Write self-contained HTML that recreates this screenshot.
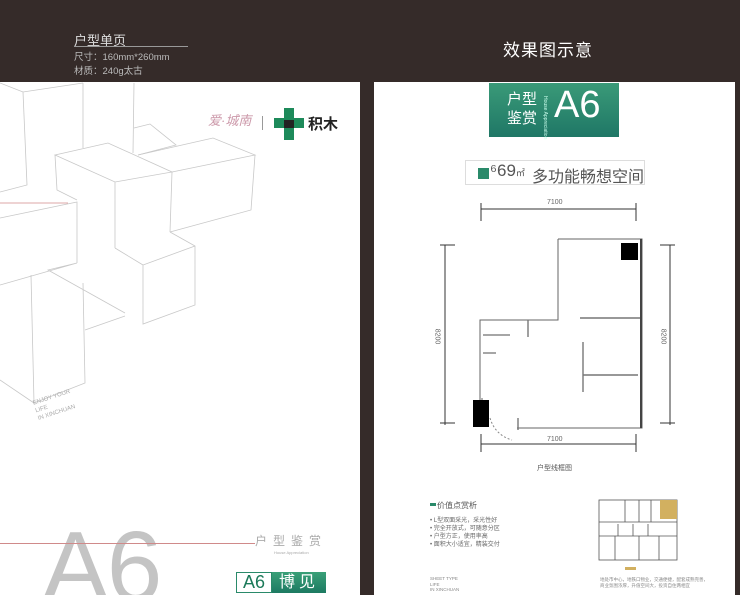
<!DOCTYPE html>
<html><head><meta charset="utf-8"><style>
*{margin:0;padding:0;box-sizing:border-box}
html{width:740px;height:595px;overflow:hidden}
body{width:740px;height:595px;background:#352b29;position:relative;overflow:hidden;font-family:"Liberation Sans","Noto Sans CJK SC",sans-serif}
.a{position:absolute;white-space:nowrap}
</style></head><body>
<div class="a" style="left:74px;top:30px;color:#ddd;font-size:13px">户型单页</div>
<div class="a" style="left:74px;top:46px;width:114px;height:1px;background:#999"></div>
<div class="a" style="left:74px;top:49px;color:#bbb;font-size:9.5px">尺寸：160mm*260mm</div>
<div class="a" style="left:74px;top:63px;color:#bbb;font-size:9.5px">材质：240g太古</div>
<div class="a" style="left:503px;top:36px;color:#fff;font-size:17px;letter-spacing:1px">效果图示意</div>

<div class="a" style="left:0;top:82px;width:360px;height:513px;background:#fff"></div>
<div class="a" style="left:374px;top:82px;width:361px;height:513px;background:#fff"></div>

<svg class="a" style="left:0;top:0" width="360" height="590" fill="none" stroke="#c8c8c8" stroke-width="0.8">
<path d="M0 83 L23 92 L83 83 M23 92 L27 185 L0 192 M83 83 L83 148 M134 83 L133 153"/>
<path d="M134 128 L150 124 L176 145 L138 155"/>
<path d="M55 155 L108 143 L172 172 L115 182 Z M115 182 L115 248 M55 155 L57 190 L77 200 M172 172 L170 232"/>
<path d="M138 155 L213 138 L255 155 L172 172 M255 155 L251 210 L170 232"/>
<path d="M170 232 L195 246 L195 305 L143 324 L143 265 L195 246 M115 248 L143 265"/>
<path d="M0 218 L77 202 L77 263 M0 285 L77 263 L48 270 L125 313 M31 275 L34 403 L85 383 L83 283 M85 330 L125 316 M0 380 L34 403"/>
<path d="M0 203 L68 203" stroke="#d08a8a"/>
</svg>
<div class="a" style="left:32px;top:400px;color:#aaa;font-size:6px;line-height:8px;transform:rotate(-18deg);transform-origin:left top">ENJOY YOUR<br>LIFE<br>IN XINCHUAN</div>

<div class="a" style="left:208px;top:110px;font-size:13px;color:#c9a;font-style:italic">爱·城南</div>
<div class="a" style="left:262px;top:116px;width:1px;height:14px;background:#999"></div>
<svg class="a" style="left:272px;top:106px" width="34" height="36"><path d="M12 2h10v10h10v10h-10v12h-10v-12h-10v-10h10z" fill="#1d8a5a"/><rect x="12" y="14" width="10" height="8" fill="#222"/></svg>
<div class="a" style="left:308px;top:113px;font-size:15px;color:#222;font-weight:bold">积木</div>

<div class="a" style="left:0;top:520px;width:200px;height:75px;overflow:hidden">
<div class="a" style="left:42px;top:0;height:75px;font-size:100px;color:#c4c4c4;letter-spacing:-2px;line-height:95px;overflow:hidden">A6</div>
</div>
<div class="a" style="left:0;top:543px;width:255px;height:1px;background:#d08a8a"></div>
<div class="a" style="left:255px;top:532px;font-size:12px;color:#aaa;letter-spacing:6px">户型鉴赏</div>
<div class="a" style="left:274px;top:550px;font-size:4px;color:#aaa">House Appreciation</div>
<div class="a" style="left:236px;top:572px;width:36px;height:21px;border:1px solid #2a8a6a;color:#1c7a5a;font-size:18px;line-height:19px;text-align:center">A6</div>
<div class="a" style="left:272px;top:572px;width:54px;height:21px;background:linear-gradient(#3aa078,#1d7a62);color:#fff;font-size:16px;line-height:21px;text-align:center;letter-spacing:4px">博见</div>

<div class="a" style="left:489px;top:83px;width:130px;height:54px;background:linear-gradient(#3a9a78,#1f7766)"></div>
<div class="a" style="left:507px;top:90px;color:#fff;font-size:15px;line-height:19px">户型<br>鉴赏</div>
<div class="a" style="left:542px;top:96px;color:#cfe;font-size:5px;writing-mode:vertical-rl">House Appreciation</div>
<div class="a" style="left:554px;top:84px;color:#fff;font-size:38px">A6</div>

<div class="a" style="left:465px;top:160px;width:180px;height:25px;border:1px solid #ddd;background:#fff"></div>
<div class="a" style="left:478px;top:168px;width:11px;height:11px;background:#2a8a6a"></div>
<div class="a" style="left:490px;top:161px;font-size:17px;color:#555">⁶69<span style="font-size:9px">㎡</span></div>
<div class="a" style="left:532px;top:163px;font-size:16px;color:#555">多功能畅想空间</div>

<svg class="a" style="left:420px;top:190px" width="280" height="280" fill="none" stroke="#333" stroke-width="1">
<path d="M61 13 V31 M216 13 V31 M61 19 H216"/>
<path d="M25 55 V235 M20 55 H35 M20 233 H35"/>
<path d="M250 55 V235 M240 55 H255 M240 233 H255"/>
<path d="M61 244 V262 M216 244 V262 M61 254 H216"/>
<path d="M138 49 H222 V238 H97 M138 49 V130 H60 V210 M62 208 V230" stroke="#666"/>
<path d="M221 49 V238" stroke="#444" stroke-width="2"/>
<path d="M160 128 H220 M163 152 V202 M163 185 H218 M98 228 V240 M108 130 V147" stroke="#777" stroke-width="1.4"/>
<path d="M63 145 H90 M63 163 H76" stroke="#888" stroke-width="1.5"/>
<rect x="201" y="53" width="17" height="17" fill="#000" stroke="none"/>
<rect x="53" y="210" width="16" height="27" fill="#000" stroke="none"/>
<path d="M70 228 Q75 245 92 250" stroke="#888" stroke-dasharray="2 2"/>
</svg>
<div class="a" style="left:547px;top:199px;font-size:7px;color:#666">7100</div>
<div class="a" style="left:547px;top:436px;font-size:7px;color:#666">7100</div>
<div class="a" style="left:429px;top:333px;font-size:7px;color:#666;transform:rotate(90deg)">8200</div>
<div class="a" style="left:655px;top:333px;font-size:7px;color:#666;transform:rotate(90deg)">8200</div>
<div class="a" style="left:537px;top:463px;font-size:7px;color:#555">户型线框图</div>

<div class="a" style="left:430px;top:503px;width:6px;height:3px;background:#2a8a6a"></div>
<div class="a" style="left:437px;top:500px;font-size:8px;color:#555">价值点赏析</div>
<div class="a" style="left:430px;top:517px;font-size:6px;line-height:8px;color:#666">•  L型双面采光，采光性好<br>•  完全开放式，可随意分区<br>•  户型方正，使用率高<br>•  面积大小适宜，精装交付</div>
<div class="a" style="left:430px;top:576px;height:17px;overflow:hidden;font-size:4.5px;line-height:5.5px;color:#888">SHEET TYPE<br>LIFE<br>IN XINCHUAN</div>
<svg class="a" style="left:598px;top:498px" width="82" height="64" fill="none" stroke="#555" stroke-width="0.8">
<rect x="1" y="2" width="78" height="60"/>
<path d="M1 24 H79 M1 38 H79 M27 2 V24 M41 2 V24 M53 2 V24 M17 38 V62 M41 38 V62 M61 38 V62 M20 26 V38 M35 26 V38 M50 26 V38"/>
<rect x="62" y="2" width="17" height="19" fill="#d2b060" stroke="none"/>
</svg>
<div class="a" style="left:625px;top:567px;width:11px;height:3px;background:#d2b060"></div>
<div class="a" style="left:600px;top:577px;height:16px;overflow:hidden;font-size:4.5px;line-height:5.5px;color:#888;width:112px;white-space:normal">地处市中心，地铁口物业，交通便捷，配套成熟完善，商业氛围浓厚，升值空间大，投资自住两相宜</div>
</body></html>
